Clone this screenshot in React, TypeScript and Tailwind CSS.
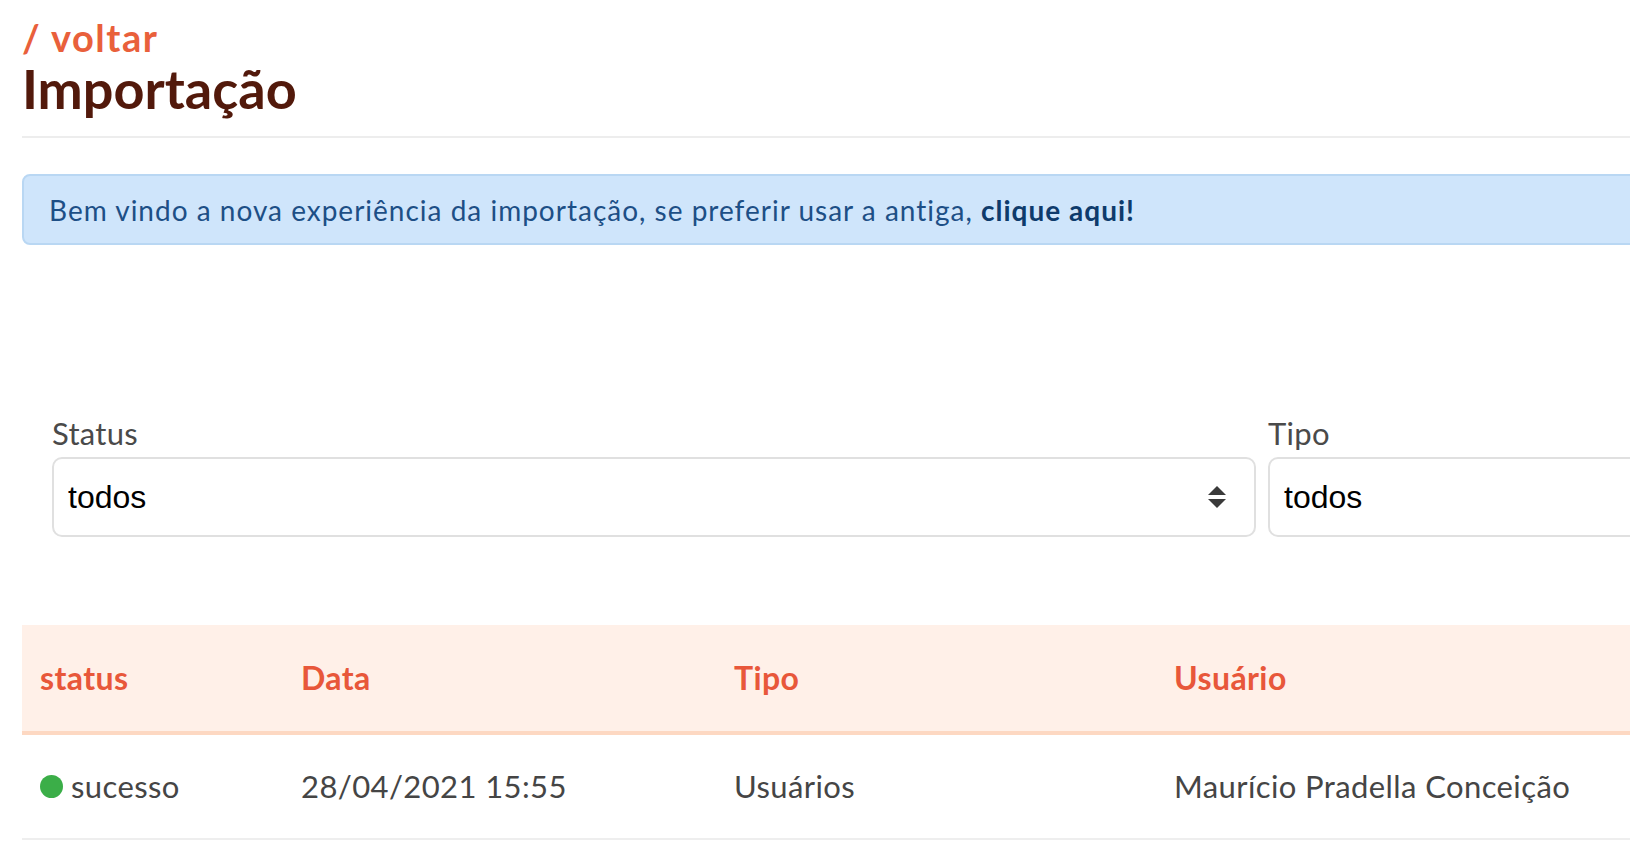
import React from "react";

export default function App() {
  return (
    <div className="w-[1630px] h-[842px] overflow-hidden bg-white" style={{ fontFamily: "Lato, 'Noto Sans', sans-serif" }}>
      <div className="w-[2000px] pl-[22px]">
        <div className="pt-[15px]">
          <div className="text-[38px] leading-[44px] font-bold tracking-[1.5px] text-[#e9603b]">/ voltar</div>
          <h1 className="text-[54px] leading-[60px] font-bold text-[#52190b]">Importação</h1>
        </div>
        <div className="mt-[17px] h-[2px] bg-[#ededed]" />
        <div className="mt-[36px] h-[71px] rounded-[8px] border-2 border-[#b9d7f3] bg-[#cfe5fb] flex items-center pl-[25px] text-[28px] tracking-[1px] text-[#1d4f86]">
          <span>
            Bem vindo a nova experiência da importação, se preferir usar a antiga,{" "}
            <span className="font-bold text-[#0e3b6c]">clique aqui!</span>
          </span>
        </div>
        <div className="mt-[170px] pl-[30px] flex gap-[12px]">
          {["Status", "Tipo"].map((label, i) => (
            <div key={label} className="w-[1204px] shrink-0 flex flex-col">
              <div className="text-[31px] leading-[36px] tracking-[0.3px] text-[#4a4a4a]">{label}</div>
              <div className="mt-[6px] h-[80px] rounded-[10px] border-2 border-[#e0e0e0] bg-white flex items-center justify-between pl-[14px] pr-[28px]">
                <span className="text-[32px] text-black" style={{ fontFamily: "'Liberation Sans', Arial, sans-serif" }}>todos</span>
                {i === 0 && (
                  <svg width="18" height="22" viewBox="0 0 18 22">
                    <path d="M9 0 L18 9 L0 9 Z" fill="#3a3a3a" />
                    <path d="M9 22 L18 13 L0 13 Z" fill="#3a3a3a" />
                  </svg>
                )}
              </div>
            </div>
          ))}
        </div>
        <div className="mt-[88px]">
          <div className="h-[110px] bg-[#fff0e8] border-b-4 border-[#fdd8c2] grid grid-cols-[261px_433px_440px_1fr] items-center px-[18px] text-[32px] font-bold tracking-[0.4px] text-[#e8573a]">
            <div>status</div>
            <div>Data</div>
            <div>Tipo</div>
            <div>Usuário</div>
          </div>
          <div className="h-[105px] border-b-2 border-[#eeeeee] grid grid-cols-[261px_433px_440px_1fr] items-center px-[18px] text-[31px] tracking-[0.4px] text-[#454545]">
            <div className="flex items-center gap-[8px]">
              <span className="w-[23px] h-[23px] rounded-full bg-[#3bae48] inline-block" />
              <span>sucesso</span>
            </div>
            <div>28/04/2021 15:55</div>
            <div>Usuários</div>
            <div>Maurício Pradella Conceição</div>
          </div>
        </div>
      </div>
    </div>
  );
}
